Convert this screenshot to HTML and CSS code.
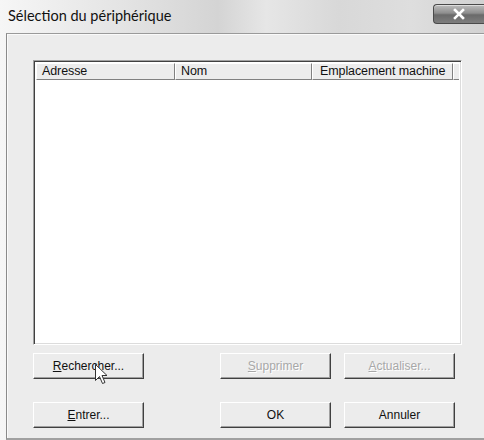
FILE: index.html
```html
<!DOCTYPE html>
<html>
<head>
<meta charset="utf-8">
<link rel="stylesheet" href="styles.css">
</head>
<body>
<div class="window">
  <div class="titlebar">
    <span class="title">Sélection du périphérique</span>
    <div class="close"><svg width="14" height="12" viewBox="0 0 14 12"><path d="M3 2 L11 10 M11 2 L3 10" stroke="#fff" stroke-width="2.6" stroke-linecap="square"/></svg></div>
  </div>
  <div class="client">
    <div class="list">
      <div class="header">
        <div class="col c1">Adresse</div>
        <div class="col c2">Nom</div>
        <div class="col c3">Emplacement machine</div>
        <div class="col c4"></div>
      </div>
      <div class="rows"></div>
    </div>
    <div class="btnrow">
      <div class="btn"><u>R</u>echercher...</div>
      <div class="right">
        <div class="btn disabled"><u>S</u>upprimer</div>
        <div class="btn disabled"><u>A</u>ctualiser...</div>
      </div>
    </div>
    <div class="btnrow second">
      <div class="btn"><u>E</u>ntrer...</div>
      <div class="right">
        <div class="btn">OK</div>
        <div class="btn">Annuler</div>
      </div>
    </div>
  </div>
  <svg class="cursor" width="13" height="21" viewBox="0 0 13 21"><path d="M0.5 0.5 L0.5 16.5 L4.5 12.5 L7.5 19.5 L10 18.5 L7 11.5 L12 11.5 Z" fill="#fff" stroke="#333" stroke-width="1"/></svg>
</div>
</body>
</html>
```
FILE: styles.css
```css
html, body { margin: 0; padding: 0; }
body { width: 484px; height: 440px; overflow: hidden; background: #f4f4f4; }
.window {
  position: relative;
  width: 484px; height: 440px;
  display: flex; flex-direction: column;
  background: linear-gradient(90deg, #f6f6f6 0%, #e4e4e4 25%, #d4d4d4 45%, #e6e6e6 55%, #d8d8d8 70%, #dedede 85%, #d2d2d2 100%);
}
.titlebar {
  height: 33px; flex: none;
  display: flex; align-items: flex-start;
  position: relative;
}
.title {
  font-family: Lato, "Noto Sans", sans-serif;
  font-size: 14.5px; color: #111;
  margin: 7px 0 0 8px;
}
.close {
  position: absolute; right: 0; top: 4px;
  width: 50px; height: 18px;
  border: 1px solid #4a4a4a; border-right: none;
  border-radius: 4px 0 0 4px;
  background: linear-gradient(180deg, #bdbdbd 0%, #8e8e8e 45%, #6a6a6a 55%, #7e7e7e 100%);
  display: flex; align-items: center; justify-content: center;
  box-shadow: inset 0 1px 0 rgba(255,255,255,0.5);
}
.client {
  flex: 1;
  margin-left: 6px;
  background: #ececec;
  border-top: 1px solid #9a9a9a;
  border-left: 1px solid #8a8a8a;
  border-bottom: 2px solid #a0a0a0;
  box-shadow: inset 1px 1px 0 #fafafa;
  padding: 26px 0 0 26px;
  display: flex; flex-direction: column;
  font-family: "Liberation Sans", Arial, sans-serif;
  font-size: 12px;
}
.list {
  width: 423px; height: 279px;
  border-top: 1px solid #a0a0a0; border-left: 1px solid #a0a0a0;
  border-bottom: 1px solid #ffffff; border-right: 1px solid #ffffff;
  box-shadow: inset 1px 1px 0 #404040, inset -1px -1px 0 #dcdcdc;
  background: #fff;
  padding: 2px;
  display: flex; flex-direction: column;
}
.header { display: flex; height: 17px; background: #ececec; }
.col {
  box-sizing: border-box;
  height: 17px; line-height: 15px;
  padding-left: 5px;
  color: #111;
  font-size: 12.5px;
  letter-spacing: -0.1px;
  border-top: 1px solid #fff; border-left: 1px solid #fff;
  border-right: 1px solid #808080; border-bottom: 1px solid #808080;
  white-space: nowrap; overflow: hidden;
}
.c1 { width: 140px; }
.c2 { width: 138px; }
.c3 { width: 142px; padding-left: 7px; }
.c4 { flex: 1; border-right: none; }
.rows { flex: 1; background: #fff; }
.btnrow {
  display: flex; justify-content: space-between;
  width: 422px;
  margin-top: 8px;
}
.btnrow.second { margin-top: 23px; }
.right { display: flex; gap: 13px; }
.btn {
  box-sizing: border-box;
  width: 111px; height: 26px;
  display: flex; align-items: center; justify-content: center;
  background: #ececec;
  color: #111;
  border-top: 1px solid #fff; border-left: 1px solid #fff;
  border-right: 1px solid #404040; border-bottom: 1px solid #404040;
  box-shadow: inset -1px -1px 0 #a0a0a0;
}
.btn u { text-decoration: underline; text-underline-offset: 1px; }
.btn.disabled { color: #a8a8a8; text-shadow: 1px 1px 0 #fff; }
.cursor { position: absolute; left: 95px; top: 364px; }
```
